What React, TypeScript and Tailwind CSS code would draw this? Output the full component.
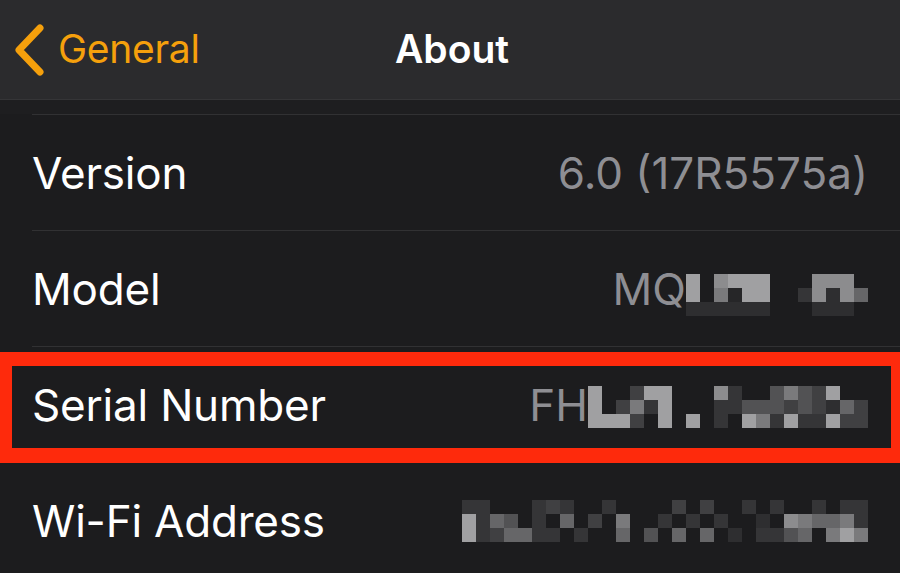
import React from "react"

const SHADES: Record<string, string> = {
  "1": "#262628",
  "2": "#2e2e30",
  "3": "#353537",
  "4": "#404042",
  "5": "#525254",
  "6": "#666668",
  "7": "#7a7a7c",
  "8": "#8c8c8e",
  "9": "#a0a0a2",
}

// pixelated (blurred out) part of a value
function Mosaic({ rows, cell, h }: { rows: string[]; cell: number; h: number }) {
  const cols = rows[0].length
  return (
    <svg width={cols * cell} height={rows.length * h} className="block">
      {rows.map((row, y) =>
        row.split("").map((c, x) =>
          SHADES[c] ? (
            <rect key={`${x}-${y}`} x={x * cell} y={y * h} width={cell} height={h} fill={SHADES[c]} />
          ) : null,
        ),
      )}
    </svg>
  )
}

function Row({ label, children }: { label: string; children: React.ReactNode }) {
  return (
    <div className="pl-8">
      <div className="h-[116px] border-t border-[#313133] flex items-center justify-between pr-8">
        <span className="text-[44px] text-white tracking-[-0.2px]">{label}</span>
        <div className="flex items-center text-[44px] text-[#8e8e93]">{children}</div>
      </div>
    </div>
  )
}

export default function App() {
  return (
    <div
      className="w-[900px] h-[573px] overflow-hidden bg-[#1c1c1e]"
      style={{ fontFamily: "Inter, 'Noto Sans', sans-serif" }}
    >
      {/* Nav bar */}
      <div className="h-[100px] bg-[#2b2b2d] border-b border-[#353537] flex items-center relative">
        <div className="flex items-center pl-[14px] gap-[12px]">
          <svg width="32" height="52" viewBox="0 0 32 52">
            <path
              d="M26 4 L5 26 L26 48"
              fill="none"
              stroke="#f5a00c"
              strokeWidth="7"
              strokeLinecap="round"
              strokeLinejoin="round"
            />
          </svg>
          <span className="text-[39px] text-[#f5a00c] tracking-[-0.3px]">General</span>
        </div>
        <div className="absolute left-0 right-0 text-center pl-[4px] pointer-events-none">
          <span className="text-[39px] font-semibold text-white">About</span>
        </div>
      </div>
      <div className="h-[14px] bg-[#1e1e20]" />

      <Row label="Version">
        <span>6.0 (17R5575a)</span>
      </Row>
      <Row label="Model">
        <span>MQ</span>
        <div className="mt-[12px]">
          <Mosaic
            cell={14}
            h={14}
            rows={["9.8999...888.", "9.7199..38286", "222222...222."]}
          />
        </div>
      </Row>
      <div className="relative">
        <Row label="Serial Number">
          <span>FH</span>
          <div className="mt-[4px]">
            <Mosaic
              cell={14}
              h={14}
              rows={["9..499...83..57549..", "9.4739...33555454264", "9994.9.9.3.9739339444"]}
            />
          </div>
        </Row>
        <div className="absolute left-0 right-0 top-[6px] h-[111px] border-t-[14px] border-b-[15px] border-l-[12px] border-r-[9px] border-[#fe2a0c]" />
      </div>
      <Row label="Wi-Fi Address">
        <Mosaic
          cell={14}
          h={14}
          rows={[
            "33...343..3....4.4..3.3..3.33",
            "9365.3.6.4.7..3.3.3..2.876673",
            "9346633.3..6.5.6.6.2.3356.797",
          ]}
        />
      </Row>
    </div>
  )
}
